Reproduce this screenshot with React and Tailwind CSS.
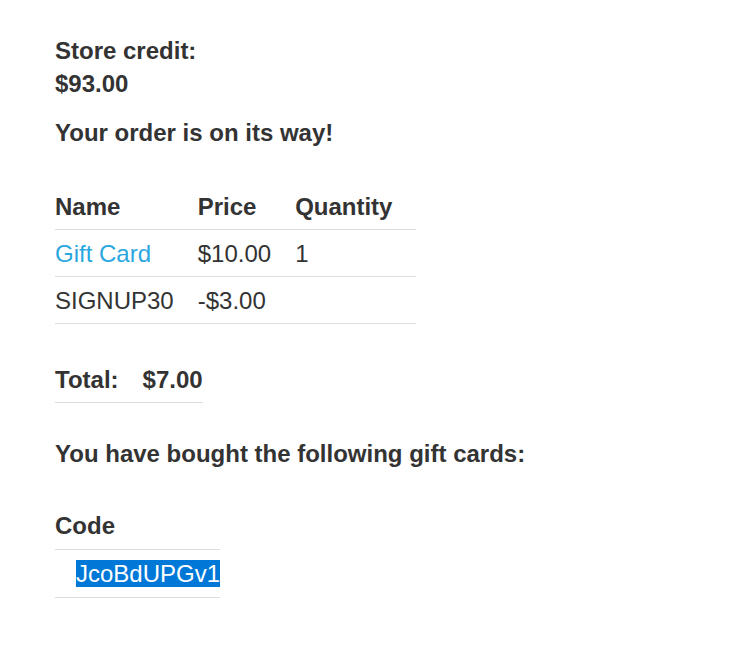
import React from 'react';

const OrderConfirmation = () => {
  const items = [
    { name: 'Gift Card', price: '$10.00', qty: '1', link: true },
    { name: 'SIGNUP30', price: '-$3.00', qty: '' },
  ];

  return (
    <div className="min-h-screen bg-white pt-[34px] pl-[55px] font-['Liberation_Sans',Arial,sans-serif] text-[24px] leading-[33px] text-[#333333]">
      <p className="font-bold">
        Store credit:
        <br />
        $93.00
      </p>
      <p className="font-bold mt-[16px]">Your order is on its way!</p>

      {/* Order lines */}
      <table className="mt-[34px] border-collapse text-left">
        <thead>
          <tr>
            <th className="py-[6.5px] pr-[24px] font-bold border-b border-[#dddddd]">Name</th>
            <th className="py-[6.5px] pr-[24px] font-bold border-b border-[#dddddd]">Price</th>
            <th className="py-[6.5px] pr-[24px] font-bold border-b border-[#dddddd]">Quantity</th>
          </tr>
        </thead>
        <tbody>
          {items.map((item) => (
            <tr key={item.name}>
              <td className="py-[6.5px] pr-[24px] border-b border-[#dddddd]">
                {item.link ? <a className="text-[#2aa7e0]">{item.name}</a> : item.name}
              </td>
              <td className="py-[6.5px] pr-[24px] border-b border-[#dddddd]">{item.price}</td>
              <td className="py-[6.5px] pr-[24px] border-b border-[#dddddd]">{item.qty}</td>
            </tr>
          ))}
        </tbody>
      </table>

      {/* Total */}
      <table className="mt-[32px] border-collapse text-left">
        <tbody>
          <tr>
            <th className="py-[6.5px] pr-[24px] font-bold border-b border-[#dddddd]">Total:</th>
            <td className="py-[6.5px] font-bold border-b border-[#dddddd]">$7.00</td>
          </tr>
        </tbody>
      </table>

      <p className="font-bold mt-[34px]">You have bought the following gift cards:</p>

      {/* Gift card codes */}
      <table className="mt-[32.5px] border-collapse text-left">
        <thead>
          <tr>
            <th className="py-[6.5px] font-bold border-b border-[#dddddd]">Code</th>
          </tr>
        </thead>
        <tbody>
          <tr>
            <td className="py-[7px] pl-[21px] border-b border-[#dddddd]">
              <span className="bg-[#0078d7] text-white">JcoBdUPGv1</span>
            </td>
          </tr>
        </tbody>
      </table>
    </div>
  );
};

export default function App() {
  return <OrderConfirmation />;
}
